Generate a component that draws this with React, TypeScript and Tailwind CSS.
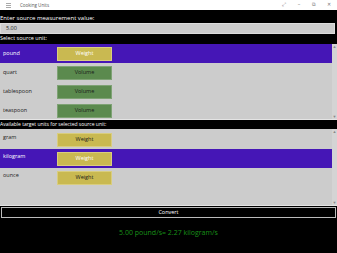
import React from "react";

const F = { fontFamily: '"Open Sans", "Liberation Sans", sans-serif' };

function Scroll({ h }: { h: number }) {
  return (
    <div className="absolute right-0 top-0 w-[5px] flex flex-col items-center justify-between bg-[#d4d4d4]" style={{ height: h }}>
      <div className="text-[4px] leading-[6px] text-[#888]">▲</div>
      <div className="text-[4px] leading-[6px] text-[#888]">▼</div>
    </div>
  );
}

function Btn({ kind, sel }: { kind: "Weight" | "Volume"; sel?: boolean }) {
  const bg = kind === "Weight" ? "bg-[#c9b951] border-[#d9cd7e]" : "bg-[#5b8a4e] border-[#7ea274]";
  return (
    <div className={`w-[55px] h-[14px] border ${bg} flex items-center justify-center text-[5.5px] ${sel ? "text-white" : "text-[#1a1a1a]"}`}>
      {kind}
    </div>
  );
}

export default function App() {
  const src = [
    { n: "pound", k: "Weight" as const, s: true },
    { n: "quart", k: "Volume" as const },
    { n: "tablespoon", k: "Volume" as const },
    { n: "teaspoon", k: "Volume" as const },
  ];
  const tgt = [
    { n: "gram", k: "Weight" as const },
    { n: "kilogram", k: "Weight" as const, s: true },
    { n: "ounce", k: "Weight" as const },
  ];
  return (
    <div className="w-[337px] h-[253px] bg-black overflow-hidden flex flex-col" style={F}>
      <div className="h-[10px] bg-white flex items-center text-[#555]">
        <div className="ml-[6px] w-[5px] flex flex-col gap-[1px]">
          <div className="h-px bg-[#aaa]" />
          <div className="h-px bg-[#aaa]" />
          <div className="h-px bg-[#aaa]" />
        </div>
        <div className="ml-[9px] text-[4.5px]">Cooking Units</div>
        <div className="ml-auto flex items-center text-[5px] text-[#777]">
          <span className="w-[16px] text-center">⤢</span>
          <span className="w-[14px] text-center">–</span>
          <span className="w-[15px] text-center">⧉</span>
          <span className="w-[16px] text-center">✕</span>
        </div>
      </div>
      <div className="h-[13px] flex items-end pb-[2px] text-white text-[6px] leading-none">Enter source measurement value:</div>
      <div className="h-[11px] mr-[2px] bg-[#cccccc] border border-[#dcdcdc] flex items-center pl-[5px] text-[5.5px] text-[#222]">5.00</div>
      <div className="h-[10px] flex items-center text-white text-[5.5px] leading-none">Select source unit:</div>
      <div className="relative h-[76px] bg-[#cccccc] border-b border-[#e4e4e4] overflow-hidden">
        {src.map((r) => (
          <div key={r.n} className={`h-[19px] flex items-center ${r.s ? "bg-[#4516b6] text-white" : "text-[#222]"}`}>
            <div className="w-[57px] pl-[3px] text-[5.5px]">{r.n}</div>
            <Btn kind={r.k} sel={r.s} />
          </div>
        ))}
        <Scroll h={76} />
      </div>
      <div className="h-[9px] flex items-center text-white text-[5px] leading-none">Available target units for selected source unit:</div>
      <div className="relative h-[77px] bg-[#cccccc] border-b border-[#e4e4e4] overflow-hidden pt-[1px]">
        {tgt.map((r) => (
          <div key={r.n} className={`h-[19px] flex items-center ${r.s ? "bg-[#4516b6] text-white" : "text-[#222]"}`}>
            <div className="w-[57px] pl-[3px] text-[5.5px] self-start pt-[3px]">{r.n}</div>
            <Btn kind={r.k} sel={r.s} />
          </div>
        ))}
        <Scroll h={77} />
      </div>
      <div className="mt-[1px] mx-[1px] h-[11px] border border-[#bbbbbb] flex items-center justify-center text-white text-[5.5px]">Convert</div>
      <div className="flex-1 flex items-center justify-center pb-[5px] text-[#189218] text-[7px]">5.00 pound/s= 2.27 kilogram/s</div>
    </div>
  );
}
